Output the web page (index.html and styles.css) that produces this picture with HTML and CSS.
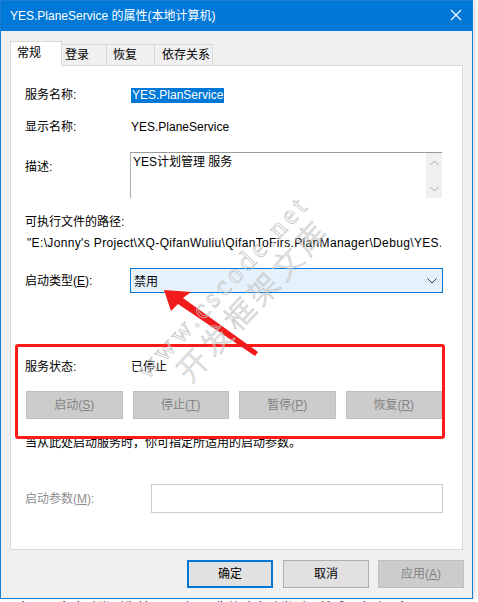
FILE: index.html
```html
<!DOCTYPE html>
<html lang="zh-CN">
<head>
<meta charset="utf-8">
<title>YES.PlaneService 的属性(本地计算机)</title>
<link rel="stylesheet" href="styles.css">
</head>
<body>
<div class="win">
  <div class="titlebar">
    <span class="title">YES.PlaneService 的属性(本地计算机)</span>
    <svg class="close" width="12" height="12" viewBox="0 0 12 12"><path d="M1 1 L11 11 M11 1 L1 11" stroke="#fff" stroke-width="1.1" fill="none"/></svg>
  </div>
  <div class="body">
    <div class="tabs">
      <div class="tab active">常规</div>
      <div class="tab t2">登录</div>
      <div class="tab t3">恢复</div>
      <div class="tab t4">依存关系</div>
    </div>
    <div class="panel">
      <div class="row r1"><span class="lbl">服务名称:</span><span class="sel">YES.PlanService</span></div>
      <div class="row r2"><span class="lbl">显示名称:</span><span class="val">YES.PlaneService</span></div>
      <div class="row r3">
        <span class="lbl lbl-desc">描述:</span>
        <div class="memo">
          <span class="memo-text">YES计划管理 服务</span>
          <div class="scroll">
            <svg width="9" height="6" viewBox="0 0 9 6"><path d="M0.5 5 L4.5 1 L8.5 5" stroke="#a6a6a6" fill="none"/></svg>
            <svg width="9" height="6" viewBox="0 0 9 6"><path d="M0.5 1 L4.5 5 L8.5 1" stroke="#a6a6a6" fill="none"/></svg>
          </div>
        </div>
      </div>
      <div class="plabel">可执行文件的路径:</div>
      <div class="path">"E:\Jonny's Project\XQ-QifanWuliu\QifanToFirs.PlanManager\Debug\YES.PlanService.exe"</div>
      <div class="row r4">
        <span class="lbl">启动类型(<u>E</u>):</span>
        <div class="combo"><span>禁用</span><svg width="10" height="6" viewBox="0 0 10 6"><path d="M0.5 0.5 L5 5 L9.5 0.5" stroke="#333" fill="none"/></svg></div>
      </div>
      <div class="row r5"><span class="lbl">服务状态:</span><span class="val">已停止</span></div>
      <div class="btnrow">
        <div class="btn dis">启动(<u>S</u>)</div>
        <div class="btn dis">停止(<u>T</u>)</div>
        <div class="btn dis">暂停(<u>P</u>)</div>
        <div class="btn dis">恢复(<u>R</u>)</div>
      </div>
      <div class="hint">当从此处启动服务时，你可指定所适用的启动参数。</div>
      <div class="row r6"><span class="lbl lbl-wide dtext">启动参数(<u>M</u>):</span><div class="input"></div></div>
    </div>
    <div class="footer">
      <div class="fbtn ok">确定</div>
      <div class="fbtn">取消</div>
      <div class="fbtn dis">应用(<u>A</u>)</div>
    </div>
  </div>

  <div class="redbox"></div>
  <svg class="arrow" width="120" height="80" viewBox="0 0 120 80">
    <polygon points="3,1 10,22 17,15 94,67 97,63 22,9 30,3" fill="#f21b1b"/>
  </svg>
  <div class="wm wm1">www.cscode.net</div>
  <div class="wm wm2">开发框架文库</div>
</div>
<div class="below">如果服务启动类型为禁用，则需要先修改启动类型，然后再启动服务。</div>
</body>
</html>
```

FILE: styles.css
```css
html, body {
  margin: 0;
  padding: 0;
}
body {
  width: 478px;
  height: 602px;
  overflow: hidden;
  background: #ffffff;
  font-family: "Liberation Sans", "Noto Sans CJK SC", sans-serif;
  font-size: 12px;
  color: #000;
}
.win {
  position: relative;
  width: 471px;
  height: 597px;
  border: 1px solid #1a7fd4;
  background: #f0f0f0;
  box-shadow: 3px 0 3px rgba(0,0,0,0.10);
  overflow: hidden;
}
.titlebar {
  height: 31px;
  background: #0078d7;
  display: flex;
  align-items: center;
  justify-content: space-between;
  padding: 0 10px 0 9px;
  margin-top: -1px;
}
.title {
  color: #fff;
  font-size: 12px;
  line-height: 16px;
}
.close {
  display: block;
  margin-top: -1px;
}
.body {
  padding: 10px 9px 0 9px;
}
.tabs {
  display: flex;
  align-items: flex-end;
  height: 24px;
  position: relative;
  z-index: 1;
}
.tab {
  height: 21px;
  line-height: 20px;
  box-sizing: border-box;
  border: 1px solid #d9d9d9;
  border-bottom: none;
  background: #f0f0f0;
  margin-left: -1px;
}
.tab.active {
  margin-left: 0;
  height: 25px;
  line-height: 22px;
  background: #fff;
  width: 52px;
  padding-left: 6px;
  margin-bottom: -1px;
  position: relative;
  z-index: 2;
}
.t2 { width: 46px; padding-left: 3px; }
.t3 { width: 49px; padding-left: 6px; }
.t4 { width: 59px; padding-left: 7px; }
.panel {
  box-sizing: border-box;
  height: 485px;
  background: #fff;
  border: 1px solid #d9d9d9;
  padding: 21px 20px 0 14px;
}
.row {
  display: flex;
  align-items: center;
}
.lbl {
  width: 106px;
  flex: none;
  line-height: 16px;
}
.lbl-wide { width: 126px; }
.val { line-height: 16px; }
.sel {
  background: #0078d7;
  color: #fff;
  line-height: 15px;
  padding: 0 1px 0 1px;
}
.r2 { margin-top: 16px; }
.r3 {
  margin-top: 17px;
  align-items: flex-start;
}
.lbl-desc { margin-top: 7px; width: 105px; }
.memo {
  flex: 1;
  height: 45px;
  border-top: 1px solid #9a9a9a;
  border-left: 1px solid #adadad;
  display: flex;
  justify-content: space-between;
}
.memo-text {
  line-height: 16px;
  padding: 1px 0 0 2px;
}
.scroll {
  width: 16px;
  background: #f0f0f0;
  display: flex;
  flex-direction: column;
  justify-content: space-between;
  align-items: center;
  padding: 7px 0 6px;
}
.scroll svg { display: block; }
.plabel {
  margin-top: 16px;
  line-height: 16px;
}
.path {
  margin-top: 5px;
  line-height: 16px;
  white-space: nowrap;
  overflow: hidden;
  width: 414px;
  padding-left: 2px;
  letter-spacing: 0.35px;
}
.r4 { margin-top: 17px; }
.r4 .lbl { width: 105px; }
.combo {
  flex: 1;
  height: 23px;
  background: #e5f1fb;
  border: 1px solid #0078d7;
  display: flex;
  align-items: center;
  justify-content: space-between;
  padding: 0 5px 0 3px;
  margin-right: -1px;
}
.combo svg { display: block; }
.r5 { margin-top: 66px; }
.btnrow {
  margin-top: 16px;
  margin-left: 1px;
  display: grid;
  grid-template-columns: repeat(4, 1fr);
  column-gap: 10px;
}
.btn {
  height: 26px;
  line-height: 26px;
  text-align: center;
  background: #cccccc;
  border: 1px solid #bfbfbf;
}
.dis { color: #838383; }
.dtext { color: #8c8c8c; }
.hint {
  margin-top: 16px;
  line-height: 16px;
}
.r6 { margin-top: 33px; }
.input {
  flex: 1;
  height: 27px;
  border: 1px solid #cccccc;
  margin-right: -1px;
}
.footer {
  display: flex;
  justify-content: flex-end;
  gap: 9px;
  margin-top: 10px;
  margin-right: -1px;
}
.fbtn {
  width: 84px;
  height: 26px;
  line-height: 26px;
  text-align: center;
  background: #e1e1e1;
  border: 1px solid #adadad;
}
.fbtn.ok {
  width: 82px;
  height: 24px;
  line-height: 24px;
  border: 2px solid #0078d7;
  margin-right: 1px;
}
.fbtn.dis {
  background: #cccccc;
  border-color: #bfbfbf;
}
.redbox {
  position: absolute;
  left: 14px;
  top: 343px;
  width: 424px;
  height: 89px;
  border: 3px solid #ff1a1a;
  border-radius: 3px;
}
.arrow {
  position: absolute;
  left: 160px;
  top: 288px;
}
.wm {
  position: absolute;
  color: transparent;
  -webkit-text-stroke: 0.7px #c4c4c4;
  white-space: nowrap;
  transform-origin: 0 100%;
  transform: rotate(-47deg);
  line-height: 1;
}
.wm1 {
  left: 150px;
  top: 355px;
  font-family: "Liberation Serif", serif;
  font-size: 28px;
  letter-spacing: 4px;
}
.wm2 {
  left: 191px;
  top: 354px;
  font-family: "Noto Sans CJK SC", sans-serif;
  font-size: 30px;
  font-weight: 300;
  letter-spacing: 4.6px;
}
.below {
  margin-top: 1px;
  padding-left: 20px;
  font-size: 13px;
  line-height: 16px;
  white-space: nowrap;
}
```
